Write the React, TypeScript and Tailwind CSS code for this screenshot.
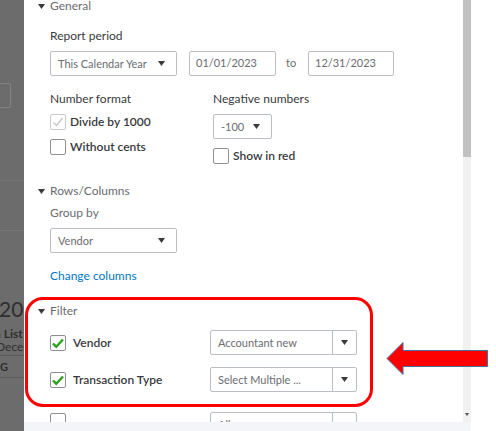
import React from "react";

const font = "font-['Lato','Open_Sans',sans-serif]";

const Caret = ({className = ""}: { className?: string }) => (
    <svg width="7" height="5" viewBox="0 0 7 5" className={className}>
        <path d="M0 0h7L3.5 5z" fill="#393a3d"/>
    </svg>
);

const SectionHead = ({label}: { label: string }) => (
    <div className="flex items-center h-[14px]">
        <Caret className="ml-[14px] mr-[5px]"/>
        <span className="text-[12px] leading-[14px] text-[#6b6c72]">{label}</span>
    </div>
);

const Box = ({checked, disabled}: { checked?: boolean, disabled?: boolean }) => (
    <div
        className={"w-[16px] h-[16px] rounded-[2px] border bg-white flex items-center justify-center shrink-0 " + (disabled ? "border-[#c9cbcf]" : "border-[#8d9096]")}>
        {checked && (
            <svg width="14" height="14" viewBox="0 0 14 14">
                {disabled
                    ? <path d="M2.5 7.5l3 3L11.5 3" fill="none" stroke="#c8c9cc" strokeWidth="1.5"/>
                    : <path d="M2 7.5l3.2 3.2L12 3.5" fill="none" stroke="#2ca01c" strokeWidth="2.4"/>}
            </svg>
        )}
    </div>
);

const Select = ({value, w}: { value: string, w: string }) => (
    <div className={"h-[25px] border border-[#babec5] rounded-[2px] flex items-center px-[7px] bg-white " + w}>
        <span className="flex-1 text-[11px] leading-[14px] text-[#6b6c72]">{value}</span>
        <Caret className="mr-[4px]"/>
    </div>
);

const Combo = ({value}: { value: string }) => (
    <div className="h-[25px] w-[147px] border border-[#babec5] rounded-[2px] flex bg-white">
        <span className="flex-1 flex items-center pl-[7px] text-[11px] leading-[14px] text-[#6b6c72]">{value}</span>
        <div className="w-[24px] border-l border-[#babec5] flex items-center justify-center">
            <Caret/>
        </div>
    </div>
);

const FilterRow = ({label, value, className = ""}: { label: string, value: string, className?: string }) => (
    <div className={"flex items-center " + className}>
        <div className="w-[160px] flex items-center gap-[7px]">
            <Box checked/>
            <span className="text-[12px] leading-[16px] font-semibold text-[#393a3d]">{label}</span>
        </div>
        <Combo value={value}/>
    </div>
);

const Check = ({label, checked, disabled}: { label: string, checked?: boolean, disabled?: boolean }) => (
    <div className="flex items-center gap-[4px] h-[16px]">
        <Box checked={checked} disabled={disabled}/>
        <span className="text-[12px] leading-[16px] font-semibold text-[#393a3d]">{label}</span>
    </div>
);

const Backdrop = () => (
    <div className="w-[24px] bg-[#6c6c6c] flex flex-col overflow-hidden whitespace-nowrap text-[#2f2f2f]">
        <div className="mt-[83px] w-[11px] h-[25px] border border-[#838383] border-l-0 rounded-r-[2px]"/>
        <div className="mt-[72px] h-px bg-[#767676]"/>
        <div className="mt-[49px] h-px bg-[#767676]"/>
        <div className="mt-[66px] text-[21px] leading-[24px] ml-[-1px]">202</div>
        <div className="mt-[6px] text-[12px] leading-[14px] font-bold ml-[-6px]">n List</div>
        <div className="text-[12px] leading-[12px] ml-[-4px]">Decer</div>
        <div className="mt-[2px] h-px bg-[#5a5a5a]"/>
        <div className="mt-[4px] text-[11px] leading-[14px] font-bold">G</div>
        <div className="mt-[3px] h-px bg-[#5a5a5a]"/>
    </div>
);

export default function App() {
    return (
        <div className={"w-[496px] h-[431px] flex bg-white overflow-hidden relative " + font}>
            <Backdrop/>
            <div className="w-[447px] flex flex-col">
                <div className="h-[422px] flex">
                    <div className="flex-1 overflow-hidden flex flex-col">
                        <div className="-mt-[1px]">
                            <SectionHead label="General"/>
                        </div>
                        <div className="pl-[26px] flex flex-col">
                            <div className="mt-[16px] h-[14px] flex items-center text-[12px] text-[#393a3d]">Report period</div>
                            <div className="mt-[8px] flex items-center">
                                <Select value="This Calendar Year" w="w-[127px]"/>
                                <div className="ml-[12px] w-[87px] h-[25px] border border-[#babec5] rounded-[2px] flex items-center px-[6px] text-[11px] text-[#6b6c72]">01/01/2023</div>
                                <span className="ml-[10px] w-[22px] text-[11px] text-[#6b6c72]">to</span>
                                <div className="w-[86px] h-[25px] border border-[#babec5] rounded-[2px] flex items-center px-[6px] text-[11px] text-[#6b6c72]">12/31/2023</div>
                            </div>
                            <div className="mt-[16px] flex">
                                <div className="w-[163px] flex flex-col">
                                    <div className="h-[14px] flex items-center text-[12px] text-[#393a3d]">Number format</div>
                                    <div className="mt-[8px]">
                                        <Check label="Divide by 1000" checked disabled/>
                                    </div>
                                    <div className="mt-[9px]">
                                        <Check label="Without cents"/>
                                    </div>
                                </div>
                                <div className="flex flex-col">
                                    <div className="h-[14px] flex items-center text-[12px] text-[#393a3d]">Negative numbers</div>
                                    <div className="mt-[8px]">
                                        <Select value="-100" w="w-[59px]"/>
                                    </div>
                                    <div className="mt-[9px]">
                                        <Check label="Show in red"/>
                                    </div>
                                </div>
                            </div>
                        </div>
                        <div className="mt-[20px]">
                            <SectionHead label="Rows/Columns"/>
                        </div>
                        <div className="pl-[26px] flex flex-col">
                            <div className="mt-[8px] h-[14px] flex items-center text-[12px] text-[#6b6c72]">Group by</div>
                            <div className="mt-[8px]">
                                <Select value="Vendor" w="w-[127px]"/>
                            </div>
                            <div className="mt-[16px] h-[14px] flex items-center text-[12px] text-[#0077c5]">Change columns</div>
                        </div>
                        <div className="relative mt-[14px] ml-[1px] w-[348px] border-[3px] border-[#ff0000] rounded-[18px] pt-[4px] pb-[12px]">
                            <div className="-ml-[4px]">
                                <SectionHead label="Filter"/>
                            </div>
                            <div className="pl-[22px]">
                                <FilterRow label="Vendor" value="Accountant new" className="mt-[12px]"/>
                                <FilterRow label="Transaction Type" value="Select Multiple ..." className="mt-[12px]"/>
                            </div>
                        </div>
                        <div className="-mt-[3px] ml-[26px] w-[333px] h-px bg-[#e3e5e8]"/>
                        <div className="mt-[8px] ml-[26px] flex items-start">
                            <div className="w-[160px] flex gap-[7px] pt-[1px]">
                                <Box/>
                                <span className="text-[12px] font-semibold text-[#393a3d] leading-[16px] pt-[6px]">A</span>
                            </div>
                            <Combo value="All"/>
                        </div>
                    </div>
                    <div className="w-[8px] bg-[#f1f1f1] flex flex-col">
                        <div className="h-[157px] bg-[#c1c1c1]"/>
                        <div className="flex-1"/>
                        <svg width="8" height="6" viewBox="0 0 8 6" className="mb-[4px]">
                            <path d="M2 1h4L4 4z" fill="#505050"/>
                        </svg>
                    </div>
                </div>
                <div className="h-[9px] bg-[#f4f5f8]"/>
            </div>
            <div className="flex-1 bg-white"/>
            <svg width="104" height="36" viewBox="0 0 104 36" className="absolute left-[386px] top-[341px]">
                <path d="M1 17.5L17 1.5V9.5H101.5V25.5H17V33.5Z" fill="#ff0000" stroke="#41719c" strokeWidth="1"/>
            </svg>
        </div>
    );
}
